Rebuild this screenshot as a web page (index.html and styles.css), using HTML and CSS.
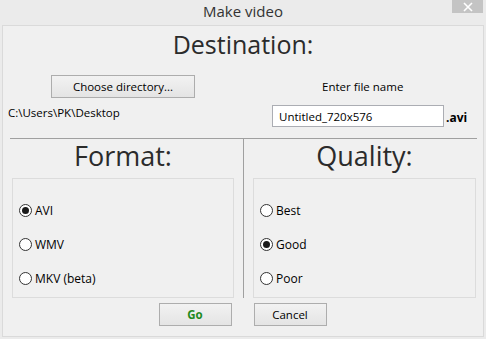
FILE: index.html
```html
<!DOCTYPE html>
<html lang="en">
<head>
    <meta charset="UTF-8">
    <title>Make video</title>
    <link rel="stylesheet" href="styles.css">
</head>
<body>
    <div class="title-bar">
        <div class="title">Make video</div>
        <div class="close-button">
            <svg width="10" height="10" viewBox="0 0 10 10"><path d="M1 1 L9 9 M9 1 L1 9" stroke="#fff" stroke-width="1.6"/></svg>
        </div>
    </div>

    <div class="window-body">
        <h1 class="section-title">Destination:</h1>

        <div class="destination">
            <div class="dest-left">
                <button class="win-button choose-button">Choose directory...</button>
                <div class="path">C:\Users\PK\Desktop</div>
            </div>
            <div class="dest-right">
                <div class="file-label">Enter file name</div>
                <div class="file-row">
                    <input class="file-input" type="text" value="Untitled_720x576">
                    <span class="ext">.avi</span>
                </div>
            </div>
        </div>

        <div class="panels">
            <div class="panel left">
                <h2 class="panel-title">Format:</h2>
                <div class="group-box">
                    <label class="radio-row"><span class="radio checked"></span>AVI</label>
                    <label class="radio-row"><span class="radio"></span>WMV</label>
                    <label class="radio-row"><span class="radio"></span>MKV (beta)</label>
                </div>
            </div>
            <div class="panel right">
                <h2 class="panel-title">Quality:</h2>
                <div class="group-box">
                    <label class="radio-row"><span class="radio"></span>Best</label>
                    <label class="radio-row"><span class="radio checked"></span>Good</label>
                    <label class="radio-row"><span class="radio"></span>Poor</label>
                </div>
            </div>
        </div>

        <div class="actions">
            <button class="win-button go-button">Go</button>
            <button class="win-button">Cancel</button>
        </div>
    </div>
</body>
</html>
```

FILE: styles.css
```css
* {
    margin: 0;
    padding: 0;
    box-sizing: border-box;
    font-family: 'Open Sans', 'Noto Sans', sans-serif;
}

body {
    width: 486px;
    height: 339px;
    background-color: #ebebeb;
    color: #000;
    display: flex;
    flex-direction: column;
    overflow: hidden;
}

.title-bar {
    height: 25px;
    display: flex;
    justify-content: center;
    align-items: center;
    position: relative;
}

.title {
    font-size: 15px;
    color: #333;
    padding-bottom: 3px;
}

.close-button {
    position: absolute;
    top: 0;
    right: 3px;
    width: 31px;
    height: 13px;
    background-color: #c4c4c4;
    display: flex;
    justify-content: center;
    align-items: center;
}

.window-body {
    flex: 1;
    margin: 0 2px 2px 2px;
    border: 1px solid #dadada;
    background-color: #f0f0f0;
    display: flex;
    flex-direction: column;
}

.section-title {
    font-size: 25px;
    font-weight: 400;
    color: #2b2b2b;
    text-align: center;
    line-height: 34px;
    margin-top: 1px;
}

.destination {
    display: flex;
    height: 77px;
    padding-top: 14px;
}

.dest-left {
    width: 241px;
    display: flex;
    flex-direction: column;
}

.win-button {
    height: 23px;
    border: 1px solid #adadad;
    background: linear-gradient(#f2f2f2, #e4e4e4);
    font-size: 11.5px;
    color: #000;
    font-family: 'Open Sans', 'Noto Sans', sans-serif;
}

.choose-button {
    width: 144px;
    margin-left: 48px;
}

.path {
    font-size: 11.5px;
    margin-top: 7px;
    margin-left: 5px;
}

.dest-right {
    flex: 1;
    display: flex;
    flex-direction: column;
}

.file-label {
    font-size: 11.5px;
    margin-left: 78px;
    margin-top: 4px;
}

.file-row {
    display: flex;
    align-items: center;
    margin-top: 11px;
    margin-left: 28px;
}

.file-input {
    width: 172px;
    height: 22px;
    border: 1px solid #abadb3;
    background: #fff;
    font-size: 11.5px;
    padding: 0 6px;
    font-family: 'Open Sans', 'Noto Sans', sans-serif;
    outline: none;
}

.ext {
    font-size: 12px;
    font-weight: 700;
    margin-left: 2px;
    margin-top: 2px;
}

.panels {
    display: flex;
    height: 160px;
    margin: 0 6px 0 7px;
}

.panel {
    border-top: 1px solid #a0a0a0;
    display: flex;
    flex-direction: column;
}

.panel.left {
    width: 233px;
    padding: 0 9px 0 2px;
}

.panel.right {
    flex: 1;
    border-left: 1px solid #a0a0a0;
    padding: 0 1px 0 9px;
}

.panel-title {
    font-size: 27px;
    font-weight: 400;
    color: #2b2b2b;
    text-align: center;
    line-height: 34px;
    height: 39px;
}

.group-box {
    flex: 1;
    border: 1px solid #dcdcdc;
    display: flex;
    flex-direction: column;
    padding: 22px 0 0 6px;
    gap: 15px;
}

.radio-row {
    display: flex;
    align-items: center;
    font-size: 12px;
    height: 19px;
}

.radio {
    width: 13px;
    height: 13px;
    border: 1px solid #333;
    border-radius: 50%;
    background: #fff;
    margin-right: 3px;
    display: flex;
    justify-content: center;
    align-items: center;
}

.radio.checked::after {
    content: '';
    width: 7px;
    height: 7px;
    border-radius: 50%;
    background: #1a1a1a;
}

.actions {
    display: flex;
    justify-content: center;
    gap: 22px;
    padding-top: 5px;
    padding-right: 1px;
}

.actions .win-button {
    width: 73px;
}

.go-button {
    color: #1f8a1f;
    font-weight: 700;
}
```
